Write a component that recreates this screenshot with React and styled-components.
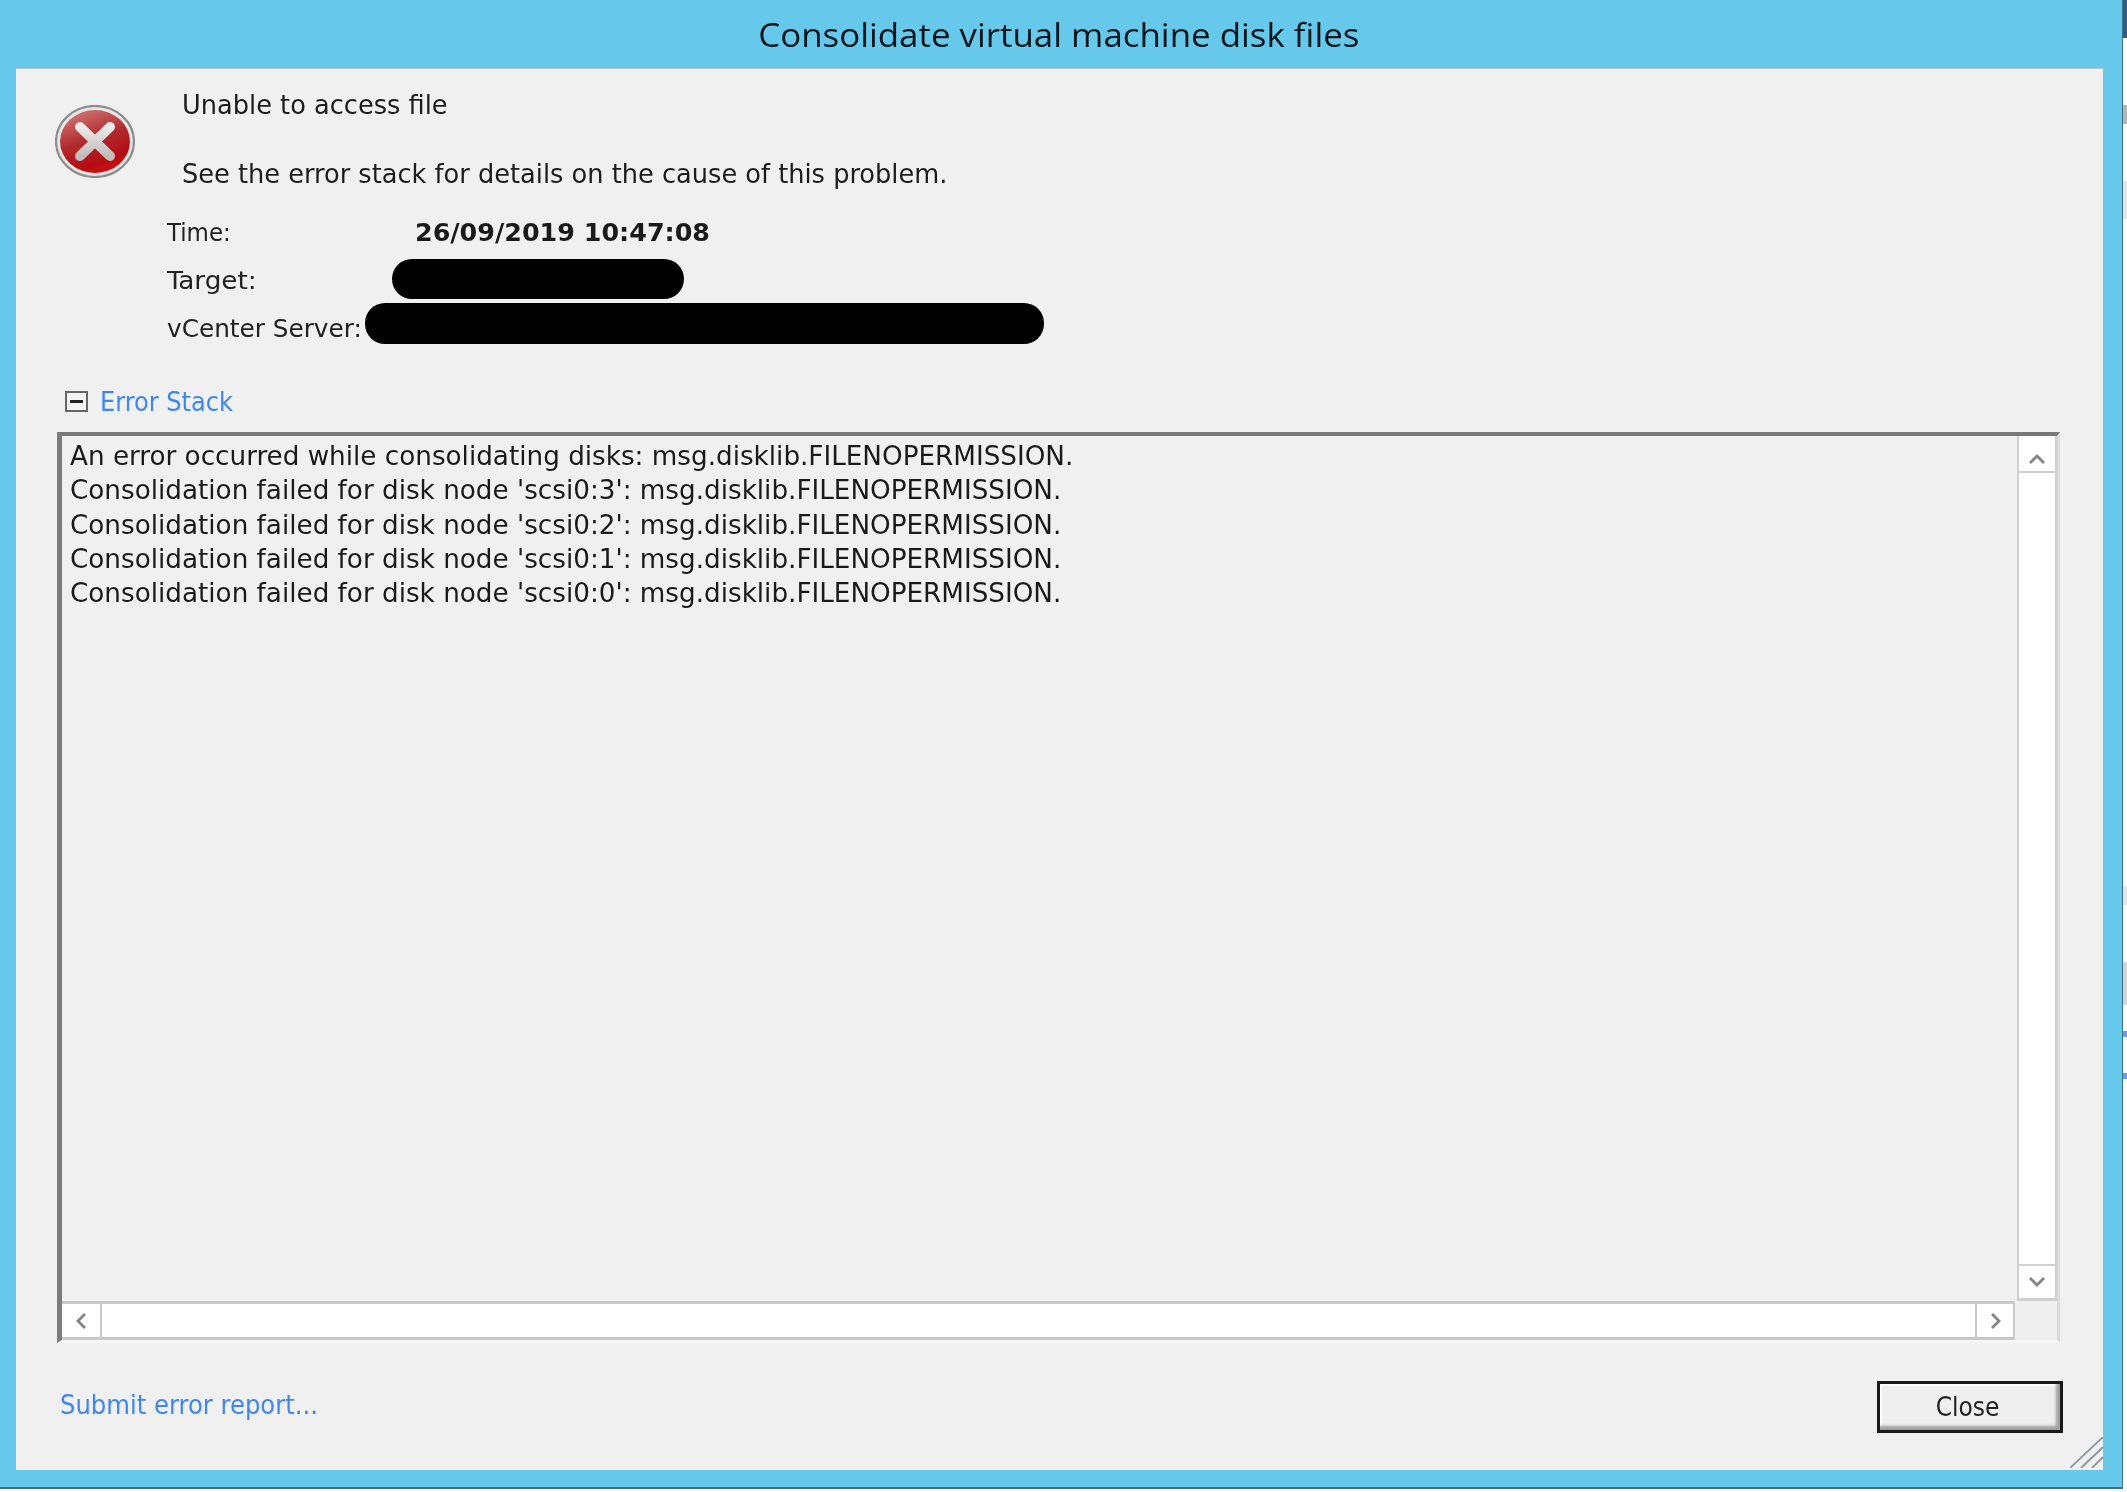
import React from "react";
import styled, { createGlobalStyle } from "styled-components";

const Global = createGlobalStyle`
  html, body { margin: 0; padding: 0; background: #fff; }
  #root { width: 2127px; height: 1492px; }
  * { box-sizing: border-box; }
`;

const Page = styled.div`
  width: 2127px; height: 1492px; display: flex;
  font-family: "DejaVu Sans Condensed", "DejaVu Sans", sans-serif; font-stretch: condensed; color: #1c1c1c;
  background: #fff; overflow: hidden; filter: blur(0.55px);
`;
const Window = styled.div`
  width: 2123px; height: 1489px; flex: none; display: flex; flex-direction: column;
  background: #66c9eb; border-right: 1px solid #3f6f85; border-bottom: 2px solid #3f6f85;
`;
const TitleBar = styled.div`
  height: 68px; flex: none; display: flex; align-items: center; justify-content: center;
  padding: 0 4px 0 0;
`;
const TitleText = styled.span`
  font-family: "Open Sans", sans-serif; font-stretch: normal; font-size: 32px; color: #0a151c;
  transform: scaleX(1.09);
`;
const Panel = styled.div`
  position: relative; flex: 1; min-height: 0; margin: 0 19px 17px 16px;
  background: #f0f0f0; display: flex; flex-direction: column; padding: 0 43px 0 41px;
  border-top: 1px solid #b6c6cf;
`;
const Header = styled.div`
  display: flex; margin-left: -2px; padding-top: 18px;
`;
const ErrorGlyph = styled.svg`
  width: 80px; height: 73px; margin-top: 18px; flex: none;
`;
const Messages = styled.div`
  margin-left: 47px; display: flex; flex-direction: column; gap: 35px; position: relative; top: 1px;
`;
const Message = styled.div`
  font-size: 27px; line-height: 34px; white-space: nowrap; color: #1c1c1c;
  transform: scaleX(1.056); transform-origin: left center;
`;
const Meta = styled.div`
  padding-left: 110px; margin-top: 25px; display: flex; flex-direction: column;
`;
const MetaRow = styled.div`
  display: flex; height: ${p => p.$h}px; margin-top: ${p => p.$mt}px; align-items: center;
`;
const MetaLabel = styled.div`
  width: ${p => p.$w}px; flex: none; font-size: 25px; white-space: nowrap; color: #222;
  padding-top: ${p => p.$pt || 0}px;
  transform: scaleX(${p => p.$sx || 1}); transform-origin: left center;
`;
const TimeValue = styled.div`
  font-family: "DejaVu Sans", sans-serif; font-stretch: normal; font-size: 25.4px; font-weight: 700;
  white-space: nowrap; color: #1a1a1a;
`;
const Redaction = styled.div`
  width: ${p => p.$w}px; height: 100%; background: #000; border-radius: 20px;
`;
const StackHeading = styled.div`
  display: flex; align-items: center; height: 34px; margin: 40px 0 14px 8px; gap: 12px;
`;
const Toggle = styled.div`
  width: 23px; height: 21px; border: 2px solid #666; background: #f4f4f4;
  display: flex; align-items: center; justify-content: center;
  &::before { content: ""; width: 13px; height: 3px; background: #222; }
`;
const LinkText = styled.div`
  font-size: 26px; color: #3f86ee; white-space: nowrap; padding-top: 2px;
  transform: scaleX(${p => p.$sx}); transform-origin: left center;
`;
const StackBox = styled.div`
  flex: 1; min-height: 0; display: grid; grid-template-columns: 1fr 40px; grid-template-rows: 1fr 39px;
  border-top: 4px solid #787878; border-left: 5px solid #7c7c7c;
  border-right: 3px solid #dcdcdc; border-bottom: 3px solid #f7f7f7;
`;
const StackText = styled.div`
  padding: 3px 0 0 8px; min-width: 0; overflow: hidden;
`;
const StackLine = styled.div`
  font-size: 27px; line-height: 34.3px; white-space: nowrap; color: #1a1a1a;
  transform: scaleX(1.08); transform-origin: left center;
`;
const VTrack = styled.div`
  background: #fff; display: flex; flex-direction: column; justify-content: space-between;
  border-left: 2px solid #cfcfcf; border-right: 2px solid #cfcfcf;
`;
const HTrack = styled.div`
  background: #fff; display: flex; justify-content: space-between; margin-right: 2px;
  border-top: 3px solid #c8c8c8; border-bottom: 3px solid #c8c8c8;
`;
const ArrowV = styled.div`
  height: 37px; display: flex; align-items: center; justify-content: center; background: #fff;
  padding-top: ${p => p.$down ? 0 : 10}px;
  border-top: ${p => p.$down ? "2px solid #cfcfcf" : "none"};
  border-bottom: ${p => p.$down ? "3px solid #cfcfcf" : "2px solid #cfcfcf"};
`;
const ArrowH = styled.div`
  width: 40px; display: flex; align-items: center; justify-content: center; background: #fff;
  padding-left: ${p => p.$right ? 0 : 2}px;
  ${p => p.$right ? "border-left: 2px solid #c8c8c8; border-right: 2px solid #c8c8c8;" : "border-right: 2px solid #c8c8c8;"}
`;
const Corner = styled.div`
  background: #efefef;
`;
const Footer = styled.div`
  height: 127px; flex: none; display: flex; justify-content: space-between; align-items: flex-start;
  padding-top: 38px; margin-right: -3px;
`;
const SubmitLink = styled(LinkText)`
  margin-left: 3px; line-height: 44px;
`;
const CloseButton = styled.button`
  width: 186px; height: 52px; background: #efefef; border: 3px solid #1a1a1a; font: inherit;
  font-size: 26px; color: #222; padding: 0 5px 0 0;
  box-shadow: inset -5px -5px 3px -1px #a0a0a0, inset 2px 2px 0 #fff;
`;
const Grip = styled.svg`
  position: absolute; right: 0; bottom: 2px; width: 33px; height: 31px;
`;
const Sliver = styled.div`
  flex: none; height: ${p => p.$h}px; background: ${p => p.$c};
`;
const Strip = styled.div`
  flex: 1; display: flex; flex-direction: column;
`;

const Chev = ({ d }) => (
  <svg width={20} height={20} viewBox="0 0 20 20" fill="none" stroke="#858585" strokeWidth="2.8">
    <path d={d} />
  </svg>
);

const lines = [
  "An error occurred while consolidating disks: msg.disklib.FILENOPERMISSION.",
  "Consolidation failed for disk node 'scsi0:3': msg.disklib.FILENOPERMISSION.",
  "Consolidation failed for disk node 'scsi0:2': msg.disklib.FILENOPERMISSION.",
  "Consolidation failed for disk node 'scsi0:1': msg.disklib.FILENOPERMISSION.",
  "Consolidation failed for disk node 'scsi0:0': msg.disklib.FILENOPERMISSION.",
];

const slivers = [
  [38, "#3a5a80"], [67, "#fff"], [19, "#b5b5b5"], [57, "#fff"], [38, "#e4e4e4"], [667, "#fff"],
  [19, "#e6e6e6"], [57, "#fff"], [43, "#d4d4d4"], [26, "#fff"], [6, "#6b9be8"], [36, "#fff"], [6, "#6b9be8"], [423, "#fff"],
];

export default function App() {
  return (
    <Page>
      <Global />
      <Window>
        <TitleBar><TitleText>Consolidate virtual machine disk files</TitleText></TitleBar>
        <Panel>
          <Header>
            <ErrorGlyph viewBox="0 0 80 73">
              <defs>
                <linearGradient id="red" x1="0.3" y1="0" x2="0.7" y2="1">
                  <stop offset="0" stopColor="#d27272" />
                  <stop offset="0.45" stopColor="#b02a2e" />
                  <stop offset="0.8" stopColor="#b40d12" />
                  <stop offset="1" stopColor="#d40f10" />
                </linearGradient>
                <linearGradient id="cross" x1="0" y1="0" x2="0" y2="1">
                  <stop offset="0" stopColor="#eeeaea" />
                  <stop offset="1" stopColor="#c2bcbc" />
                </linearGradient>
              </defs>
              <ellipse cx="40" cy="36.5" rx="39" ry="35.5" fill="#e6e6e6" stroke="#8d8d8d" strokeWidth="2.2" />
              <ellipse cx="40" cy="36.5" rx="35" ry="31.5" fill="url(#red)" />
              <path d="M25 22 L55 51 M55 22 L25 51" stroke="url(#cross)" strokeWidth="10" strokeLinecap="round" />
            </ErrorGlyph>
            <Messages>
              <Message>Unable to access file</Message>
              <Message>See the error stack for details on the cause of this problem.</Message>
            </Messages>
          </Header>
          <Meta>
            <MetaRow $h={34} $mt={0}>
              <MetaLabel $w={248} $sx={1.02}>Time:</MetaLabel>
              <TimeValue>26/09/2019 10:47:08</TimeValue>
            </MetaRow>
            <MetaRow $h={40} $mt={10}>
              <MetaLabel $w={225} $pt={2} $sx={1.17}>Target:</MetaLabel>
              <Redaction $w={292} />
            </MetaRow>
            <MetaRow $h={41} $mt={4}>
              <MetaLabel $w={198} $pt={9} $sx={1.1}>vCenter Server:</MetaLabel>
              <Redaction $w={679} />
            </MetaRow>
          </Meta>
          <StackHeading>
            <Toggle />
            <LinkText $sx={1.03}>Error Stack</LinkText>
          </StackHeading>
          <StackBox>
            <StackText>
              {lines.map(l => <StackLine key={l}>{l}</StackLine>)}
            </StackText>
            <VTrack>
              <ArrowV><Chev d="M3 14 L10 7 L17 14" /></ArrowV>
              <ArrowV $down><Chev d="M3 6 L10 13 L17 6" /></ArrowV>
            </VTrack>
            <HTrack>
              <ArrowH><Chev d="M13 3 L6 10 L13 17" /></ArrowH>
              <ArrowH $right><Chev d="M7 3 L14 10 L7 17" /></ArrowH>
            </HTrack>
            <Corner />
          </StackBox>
          <Footer>
            <SubmitLink $sx={1.04}>Submit error report...</SubmitLink>
            <CloseButton>Close</CloseButton>
          </Footer>
          <Grip viewBox="0 0 33 31" fill="none" stroke="#8f9aa0" strokeWidth="2">
            <path d="M0 31 L33 0 M11 31 L33 10 M22 31 L33 20" />
          </Grip>
        </Panel>
      </Window>
      <Strip>
        {slivers.map(([h, c], i) => <Sliver key={i} $h={h} $c={c} />)}
      </Strip>
    </Page>
  );
}
